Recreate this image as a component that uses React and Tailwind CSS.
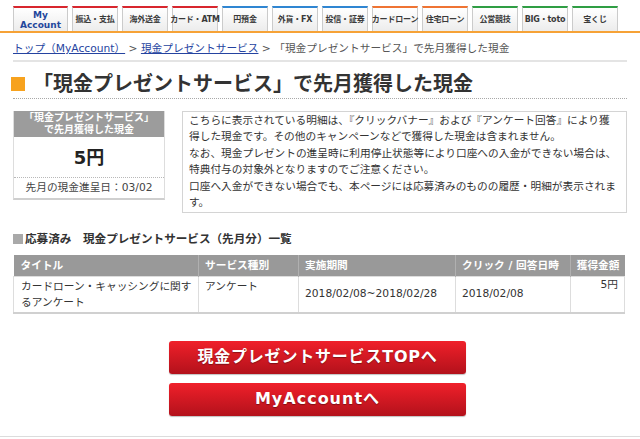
import React from 'react';

const FONT = { fontFamily: '"DejaVu Sans", "Noto Sans CJK JP", sans-serif' };

const TABS = [
  { label: 'My', label2: 'Account', top: 'border-t-[#d8262e]', text: 'text-[#23479c]', wide: true },
  { label: '振込・支払', top: 'border-t-[#d8262e]' },
  { label: '海外送金', top: 'border-t-[#d8262e]' },
  { label: 'カード・ATM', top: 'border-t-[#d8262e]' },
  { label: '円預金', top: 'border-t-[#2f86d2]' },
  { label: '外貨・FX', top: 'border-t-[#2f86d2]' },
  { label: '投信・証券', top: 'border-t-[#2f86d2]' },
  { label: 'カードローン', top: 'border-t-[#ef7433]' },
  { label: '住宅ローン', top: 'border-t-[#ef7433]' },
  { label: '公営競技', top: 'border-t-[#2f9e44]' },
  { label: 'BIG・toto', top: 'border-t-[#2f9e44]' },
  { label: '宝くじ', top: 'border-t-[#2f9e44]' },
];

function GlobalNav() {
  return (
    <nav className="pt-[6px] pl-[13px] flex gap-[4px] border-b-2 border-[#f6a236]">
      {TABS.map((t) => (
        <div
          key={t.label}
          className={`${t.wide ? 'w-[55px]' : 'w-[46px]'} h-[25px] flex flex-col items-center justify-center border-x border-t-2 border-x-[#cbcbcb] ${t.top} bg-linear-to-b from-white to-[#ececec] font-bold text-center whitespace-nowrap ${t.wide ? 'text-[9px] leading-[10px]' : 'text-[8px] leading-[10px] tracking-[-0.2px]'} ${t.text || 'text-[#3a3a3a]'}`}
        >
          <span>{t.label}</span>
          {t.label2 && <span>{t.label2}</span>}
        </div>
      ))}
    </nav>
  );
}

export default function App() {
  return (
    <div className="w-[640px] min-h-[439px] bg-white text-[#333]" style={FONT}>
      <GlobalNav />

      <div className="px-[13px]">
        {/* パンくず */}
        <div className="mt-[8px] pb-[3px] border-b-2 border-[#e4e4e4] text-[10.7px] leading-[16px] text-[#555] whitespace-nowrap">
          <a className="text-[#2543a0] underline">トップ（MyAccount）</a>
          <span> &gt; </span>
          <a className="text-[#2543a0] underline">現金プレゼントサービス</a>
          <span> &gt; 「現金プレゼントサービス」で先月獲得した現金</span>
        </div>

        {/* 見出し */}
        <div className="mt-[8px] h-[29px] flex items-center border-b border-dotted border-[#a8a8a8]">
          <span className="w-[14px] h-[14px] bg-[#f7a21e] ml-[-2px]" />
          <h1 className="ml-[8px] text-[20px] leading-[28px] font-bold text-[#333] whitespace-nowrap">
            「現金プレゼントサービス」で先月獲得した現金
          </h1>
        </div>

        <div className="mt-[12px] flex gap-[17px] items-start">
          {/* 獲得金額 */}
          <div className="w-[152px] shrink-0 border-x border-[#dddddd] border-b-2 border-b-[#cfcfcf]">
            <div className="bg-[#9c9c9c] text-white font-bold text-[10px] leading-[12px] text-center py-[1px]">
              <p>「現金プレゼントサービス」</p>
              <p>で先月獲得した現金</p>
            </div>
            <div className="h-[41px] flex items-center justify-center border-b border-dotted border-[#b8b8b8] text-[18px] font-bold text-[#222]">
              5円
            </div>
            <div className="h-[20px] flex items-center justify-center text-[10.7px] text-[#444]">
              先月の現金進呈日：03/02
            </div>
          </div>

          {/* 注意書き */}
          <div className="flex-1 border border-[#d4d4d4] px-[6px] py-[1px] text-[10.7px] leading-[16.4px] text-[#333]">
            <p>こちらに表示されている明細は、『クリックバナー』および『アンケート回答』により獲得した現金です。その他のキャンペーンなどで獲得した現金は含まれません。</p>
            <p>なお、現金プレゼントの進呈時に利用停止状態等により口座への入金ができない場合は、特典付与の対象外となりますのでご注意ください。</p>
            <p>口座へ入金ができない場合でも、本ページには応募済みのものの履歴・明細が表示されます。</p>
          </div>
        </div>

        {/* 一覧 */}
        <div className="mt-[18px] flex items-center h-[16px]">
          <span className="w-[10px] h-[10px] bg-[#a9a9a9]" />
          <h2 className="ml-[2px] text-[11.6px] font-bold text-[#333] whitespace-nowrap">
            応募済み　現金プレゼントサービス（先月分）一覧
          </h2>
        </div>

        <table className="mt-[8px] w-[611px] table-fixed border-collapse text-[10.7px] border-b-2 border-b-[#d0d0d0]">
          <colgroup>
            <col className="w-[185px]" />
            <col className="w-[100px]" />
            <col className="w-[157px]" />
            <col className="w-[115px]" />
            <col className="w-[54px]" />
          </colgroup>
          <thead>
            <tr className="bg-[#999999] text-white font-bold h-[21px]">
              <th className="text-left font-bold pl-[7px] border-r border-[#b0b0b0]">タイトル</th>
              <th className="text-left font-bold pl-[6px] border-r border-[#b0b0b0]">サービス種別</th>
              <th className="text-left font-bold pl-[6px] border-r border-[#b0b0b0]">実施期間</th>
              <th className="text-left font-bold pl-[6px] border-r border-[#b0b0b0] whitespace-nowrap">クリック / 回答日時</th>
              <th className="text-right font-bold pr-[5px] whitespace-nowrap">獲得金額</th>
            </tr>
          </thead>
          <tbody>
            <tr className="leading-[16.5px] text-[#333]">
              <td className="align-top pl-[7px] pr-[4px] pt-[2px] pb-[0px] border border-[#dddddd]">
                カードローン・キャッシングに関するアンケート
              </td>
              <td className="align-top px-[6px] pt-[2px] border border-[#dddddd]">アンケート</td>
              <td className="align-middle px-[6px] border border-[#dddddd] whitespace-nowrap">2018/02/08~2018/02/28</td>
              <td className="align-middle px-[6px] border border-[#dddddd]">2018/02/08</td>
              <td className="align-top text-right pr-[6px] pt-[0px] border border-[#dddddd]">5円</td>
            </tr>
          </tbody>
        </table>

        {/* ボタン */}
        <div className="mt-[27px] flex flex-col items-center gap-[9px] pr-[5px]">
          <a className="w-[297px] h-[33px] flex items-center justify-center rounded-[3px] bg-linear-to-b from-[#f0202a] to-[#b3111b] shadow-[0_1px_1px_rgba(0,0,0,0.25)] text-white text-[16px] font-bold tracking-[0.8px] [text-shadow:0_1px_1px_rgba(0,0,0,0.35)]">
            現金プレゼントサービスTOPへ
          </a>
          <a className="w-[297px] h-[33px] flex items-center justify-center rounded-[3px] bg-linear-to-b from-[#f0202a] to-[#b3111b] shadow-[0_1px_1px_rgba(0,0,0,0.25)] text-white text-[16px] font-bold tracking-[1px] [text-shadow:0_1px_1px_rgba(0,0,0,0.35)]">
            MyAccountへ
          </a>
        </div>
      </div>

      <div className="mt-[20px] border-t border-[#dcdcdc]" />
    </div>
  );
}
